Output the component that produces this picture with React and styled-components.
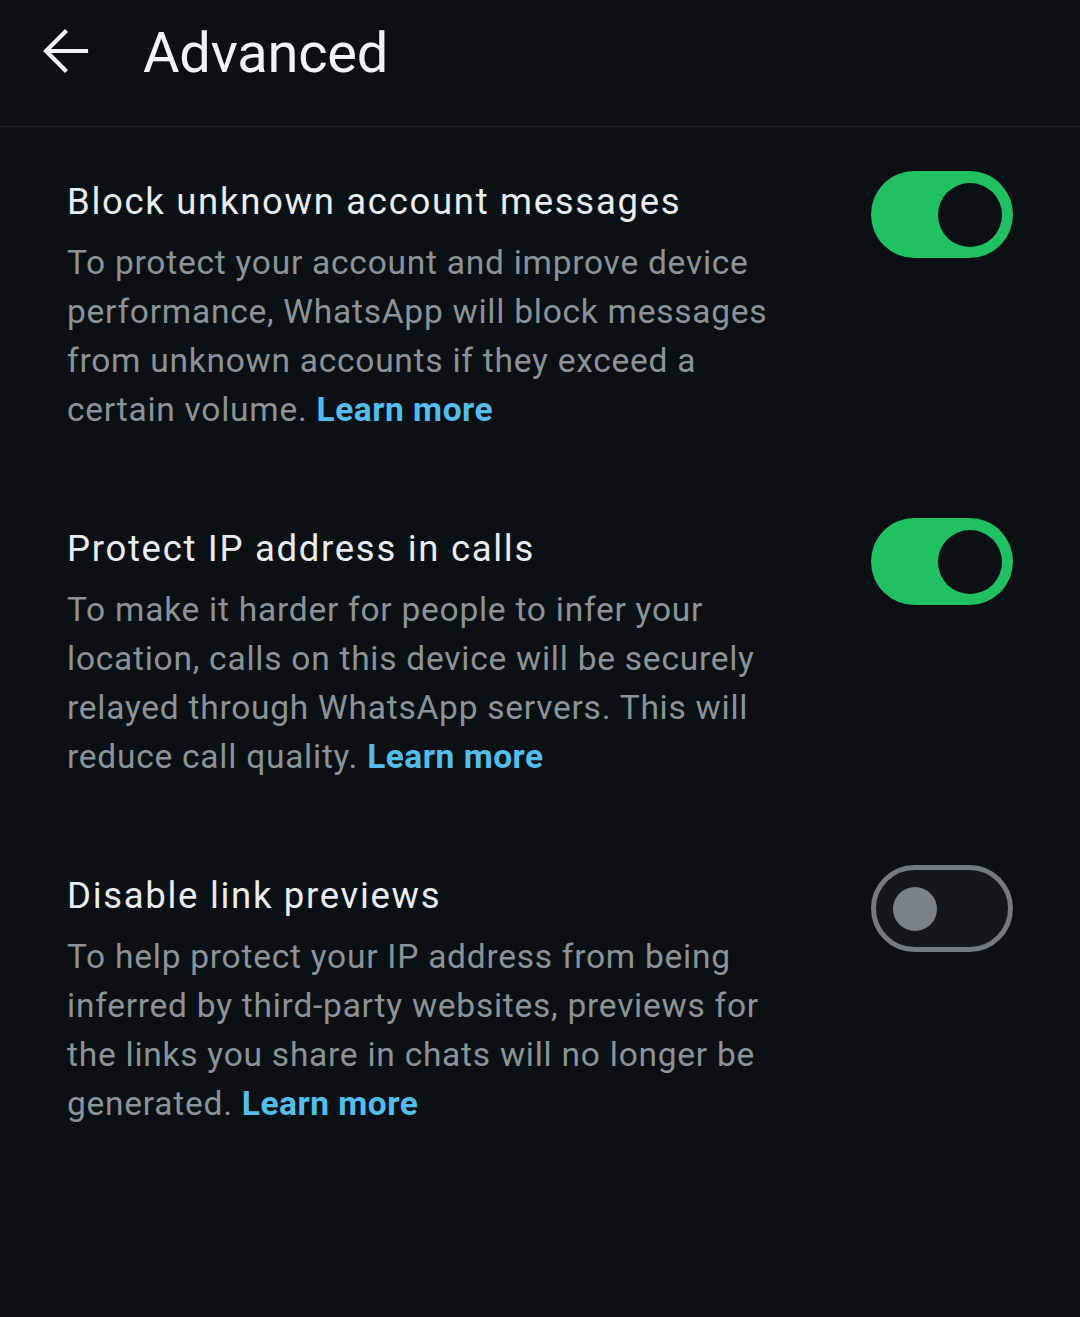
import styled, { createGlobalStyle } from 'styled-components';

const GlobalStyle = createGlobalStyle`
  html, body {
    margin: 0;
    padding: 0;
    background: #0b1014;
  }
  body {
    font-family: Roboto, "Noto Sans", sans-serif;
    -webkit-font-smoothing: antialiased;
  }
`;

const Screen = styled.div`
  width: 1080px;
  min-height: 1317px;
  background: #0b1014;
  display: flex;
  flex-direction: column;
`;

const TopBar = styled.header`
  height: 127px;
  box-sizing: border-box;
  border-bottom: 1px solid #1d2328;
  display: flex;
  align-items: flex-start;
  padding: 25px 0 0 42px;
`;

const BackButton = styled.button`
  width: 48px;
  height: 48px;
  padding: 0;
  margin-top: 3px;
  border: none;
  background: transparent;
  color: #f1f3f4;
  cursor: pointer;
  display: flex;
`;

const Title = styled.h1`
  margin: 0 0 0 53px;
  font-size: 56px;
  line-height: 57px;
  font-weight: 400;
  color: #f1f3f4;
  letter-spacing: -0.2px;
`;

const List = styled.div`
  display: flex;
  flex-direction: column;
  gap: 84px;
  padding: 44px 67px 0 67px;
`;

const Row = styled.div`
  display: flex;
  justify-content: space-between;
  align-items: flex-start;
`;

const TextCol = styled.div`
  width: 716px;
  padding-top: 7px;
`;

const SettingTitle = styled.div`
  font-size: 36.5px;
  line-height: 48px;
  letter-spacing: 1.7px;
  color: #e9edef;
`;

const Description = styled.p`
  margin: 12px 0 0;
  font-size: 33.5px;
  line-height: 49px;
  letter-spacing: 0.75px;
  color: #8b9398;
`;

const Link = styled.a`
  color: #53bdeb;
  font-weight: 700;
  letter-spacing: 0.5px;
  text-decoration: none;
`;

const Track = styled.div`
  width: 142px;
  height: 87px;
  box-sizing: border-box;
  border-radius: 44px;
  flex-shrink: 0;
  display: flex;
  align-items: center;
  justify-content: ${(p) => (p.$on ? 'flex-end' : 'flex-start')};
  padding: ${(p) => (p.$on ? '0 11px' : '0 17px')};
  background: ${(p) => (p.$on ? '#21c063' : '#13181c')};
  border: ${(p) => (p.$on ? 'none' : '5px solid #737b80')};
`;

const Thumb = styled.div`
  width: ${(p) => (p.$on ? '64px' : '44px')};
  height: ${(p) => (p.$on ? '64px' : '44px')};
  border-radius: 50%;
  background: ${(p) => (p.$on ? '#0b1014' : '#7a8287')};
`;

const Toggle = ({ on }) => (
  <Track $on={on}>
    <Thumb $on={on} />
  </Track>
);

const settings = [
  {
    title: 'Block unknown account messages',
    text: 'To protect your account and improve device performance, WhatsApp will block messages from unknown accounts if they exceed a certain volume.',
    on: true,
  },
  {
    title: 'Protect IP address in calls',
    text: 'To make it harder for people to infer your location, calls on this device will be securely relayed through WhatsApp servers. This will reduce call quality.',
    on: true,
  },
  {
    title: 'Disable link previews',
    text: 'To help protect your IP address from being inferred by third-party websites, previews for the links you share in chats will no longer be generated.',
    on: false,
  },
];

export default function App() {
  return (
    <Screen>
      <GlobalStyle />
      <TopBar>
        <BackButton aria-label="Back">
          <svg width="48" height="48" viewBox="0 0 48 48" fill="none">
            <path
              d="M44 23H5M23 4L4 23l19 19"
              stroke="currentColor"
              strokeWidth="4.2"
              strokeLinecap="square"
            />
          </svg>
        </BackButton>
        <Title>Advanced</Title>
      </TopBar>
      <List>
        {settings.map((s) => (
          <Row key={s.title}>
            <TextCol>
              <SettingTitle>{s.title}</SettingTitle>
              <Description>
                {s.text} <Link href="#">Learn more</Link>
              </Description>
            </TextCol>
            <Toggle on={s.on} />
          </Row>
        ))}
      </List>
    </Screen>
  );
}
